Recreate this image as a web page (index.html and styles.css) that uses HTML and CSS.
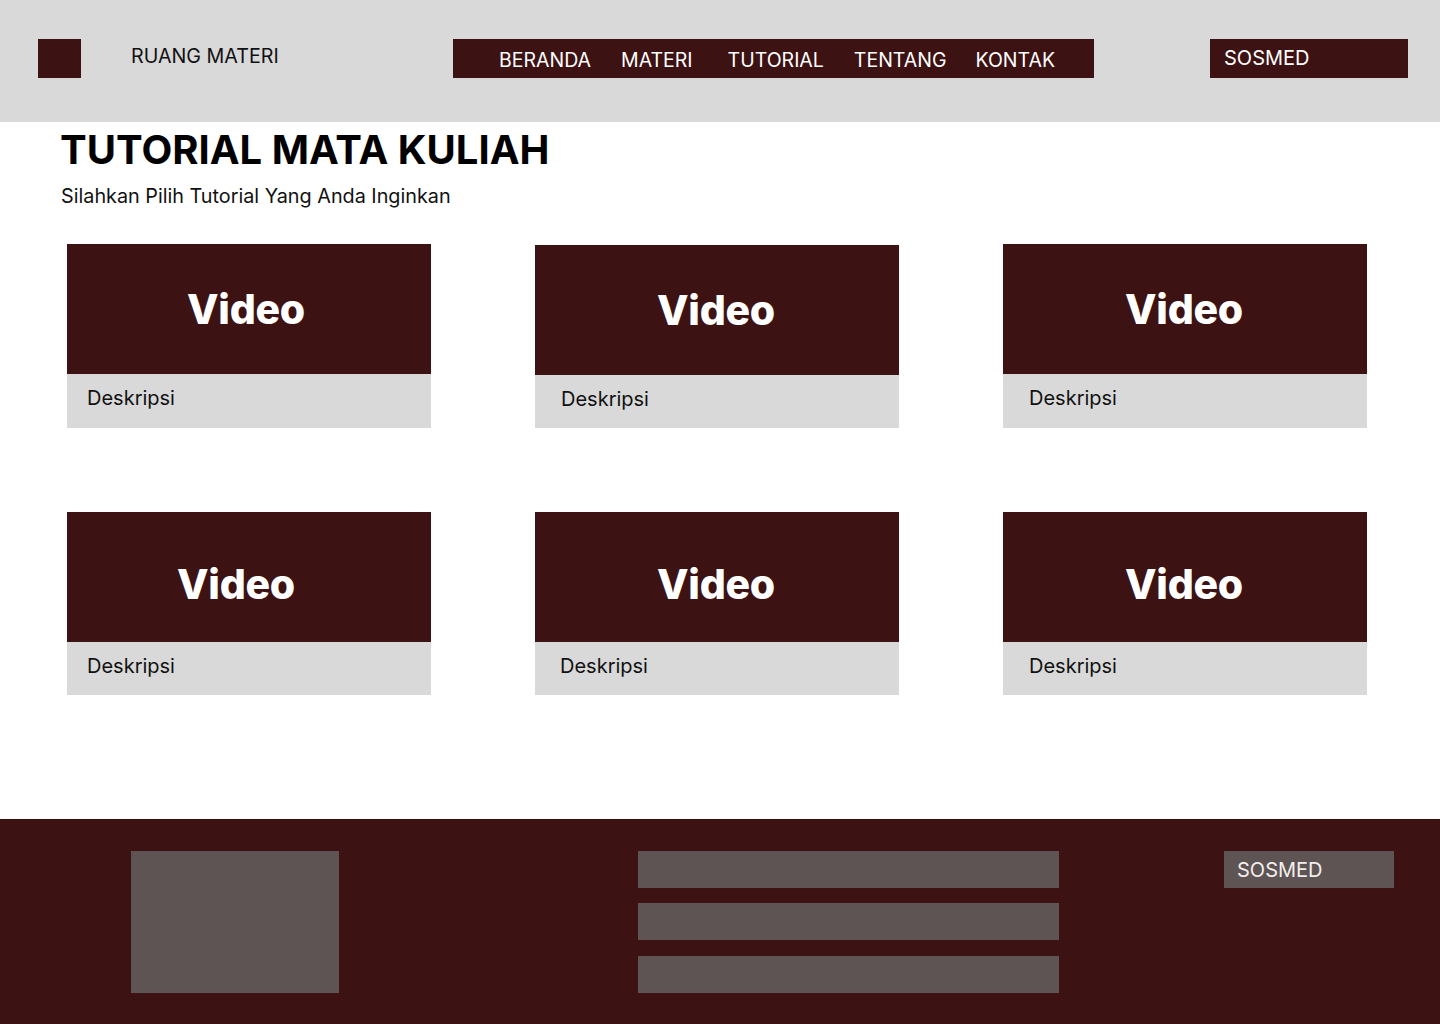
FILE: index.html
```html
<!DOCTYPE html>
<html lang="id">
<head>
<meta charset="utf-8">
<title>Ruang Materi - Tutorial</title>
<link rel="stylesheet" href="styles.css">
</head>
<body>
<header class="topbar">
  <div class="logo"></div>
  <div class="brand">RUANG MATERI</div>
  <nav class="menu">
    <a class="menu-item m1">BERANDA</a>
    <a class="menu-item m2">MATERI</a>
    <a class="menu-item m3">TUTORIAL</a>
    <a class="menu-item m4">TENTANG</a>
    <a class="menu-item m5">KONTAK</a>
  </nav>
  <div class="sosmed">SOSMED</div>
</header>

<main class="content">
  <section class="intro">
    <h1 class="title">TUTORIAL MATA KULIAH</h1>
    <p class="subtitle">Silahkan Pilih Tutorial Yang Anda Inginkan</p>
  </section>

  <section class="cards">
    <article class="card">
      <div class="video shift-a">Video</div>
      <div class="desc">Deskripsi</div>
    </article>
    <article class="card card-mid">
      <div class="video">Video</div>
      <div class="desc">Deskripsi</div>
    </article>
    <article class="card card-right">
      <div class="video">Video</div>
      <div class="desc">Deskripsi</div>
    </article>
    <article class="card row2">
      <div class="video shift-b">Video</div>
      <div class="desc">Deskripsi</div>
    </article>
    <article class="card card-mid row2">
      <div class="video">Video</div>
      <div class="desc">Deskripsi</div>
    </article>
    <article class="card card-right row2">
      <div class="video">Video</div>
      <div class="desc">Deskripsi</div>
    </article>
  </section>
</main>

<footer class="footer">
  <div class="foot-logo"></div>
  <div class="foot-links">
    <div class="foot-bar"></div>
    <div class="foot-bar"></div>
    <div class="foot-bar"></div>
  </div>
  <div class="foot-sosmed">SOSMED</div>
</footer>
</body>
</html>
```

FILE: styles.css
```css
* {
  box-sizing: border-box;
}

html, body {
  margin: 0;
  padding: 0;
}

body {
  width: 1440px;
  min-height: 1024px;
  background: #ffffff;
  font-family: Inter, "Noto Sans", "Liberation Sans", sans-serif;
  color: #000000;
}

/* ---------- Header ---------- */
.topbar {
  display: flex;
  align-items: flex-start;
  height: 122px;
  padding: 39px 0 0 38px;
  background: #d9d9d9;
}

.logo {
  width: 43px;
  height: 39px;
  background: #3d1213;
  flex: none;
}

.brand {
  width: 322px;
  margin-left: 50px;
  padding-top: 5px;
  font-size: 19.7px;
  line-height: 24px;
  color: #111111;
  flex: none;
}

.menu {
  display: flex;
  align-items: center;
  width: 641px;
  height: 39px;
  padding: 2px 0 0 46px;
  background: #3d1213;
  flex: none;
}

.menu-item {
  font-size: 19.5px;
  line-height: 24px;
  color: #ffffff;
  text-decoration: none;
}

.m2 { margin-left: 30px; }
.m3 { margin-left: 35px; }
.m4 { margin-left: 30px; }
.m5 { margin-left: 29px; }

.sosmed {
  width: 198px;
  height: 39px;
  margin-left: 116px;
  padding: 7px 0 0 14px;
  font-size: 20px;
  line-height: 24px;
  color: #ffffff;
  background: #3d1213;
  flex: none;
}

/* ---------- Main ---------- */
.intro {
  padding: 4px 0 0 61px;
}

.title {
  margin: 0 0 0 -1px;
  font-size: 40px;
  line-height: 48px;
  font-weight: 700;
  letter-spacing: 0;
  color: #000000;
}

.subtitle {
  margin: 10px 0 0;
  font-size: 19.8px;
  line-height: 24px;
  color: #111111;
}

.cards {
  display: grid;
  grid-template-columns: repeat(3, 364px);
  column-gap: 104px;
  row-gap: 84px;
  padding: 36px 0 0 67px;
}

.card {
  display: flex;
  flex-direction: column;
}

.video {
  display: flex;
  align-items: center;
  justify-content: center;
  height: 130px;
  padding: 0 2px 0 0;
  background: #3d1213;
  color: #ffffff;
  font-size: 41px;
  font-weight: 800;
  letter-spacing: -0.3px;
}

.video.shift-a {
  padding: 0 6px 0 0;
}

.row2 .video {
  padding: 14px 2px 0 0;
}

.row2 .video.shift-b {
  padding: 14px 26px 0 0;
}

.card-mid {
  margin-top: 1px;
}

.row2.card-mid {
  margin-top: 0;
}

.desc {
  height: 54px;
  padding: 12px 0 0 20px;
  background: #d9d9d9;
  font-size: 20px;
  line-height: 24px;
  color: #111111;
}

.card-mid .desc {
  height: 53px;
  padding-left: 26px;
}

.card-right .desc {
  padding-left: 26px;
}

.row2 .desc {
  height: 53px;
}

.row2.card-mid .desc {
  padding-left: 25px;
}

/* ---------- Footer ---------- */
.footer {
  display: flex;
  align-items: flex-start;
  height: 205px;
  margin-top: 124px;
  padding: 32px 0 0 131px;
  background: #3d1213;
}

.foot-logo {
  width: 208px;
  height: 142px;
  background: #5e5454;
  flex: none;
}

.foot-links {
  display: flex;
  flex-direction: column;
  gap: 15px;
  width: 421px;
  margin-left: 299px;
  flex: none;
}

.foot-bar {
  height: 37px;
  background: #5e5454;
}

.foot-bar:last-child {
  margin-top: 1px;
}

.foot-sosmed {
  width: 170px;
  height: 37px;
  margin-left: 165px;
  padding: 7px 0 0 13px;
  font-size: 20px;
  line-height: 24px;
  color: #f3eeee;
  background: #5e5454;
  flex: none;
}
```
